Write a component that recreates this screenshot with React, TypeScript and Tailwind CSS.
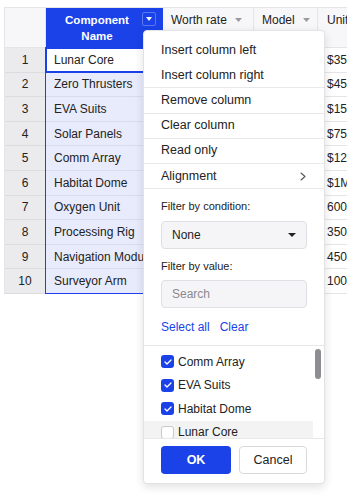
import React from "react";

const rows: [string, string, string, string][] = [
  ["Lunar Core", "High", "LC-1", "$350,000"],
  ["Zero Thrusters", "Medium", "ZT-2", "$450,000"],
  ["EVA Suits", "High", "EV-3", "$150,000"],
  ["Solar Panels", "Low", "SP-4", "$75,000"],
  ["Comm Array", "Medium", "CA-5", "$120,000"],
  ["Habitat Dome", "High", "HD-6", "$1M"],
  ["Oxygen Unit", "High", "OU-7", "600,000"],
  ["Processing Rig", "Low", "PR-8", "350,000"],
  ["Navigation Module", "Medium", "NM-9", "450,000"],
  ["Surveyor Arm", "Low", "SA-10", "100,000"],
];

const GrayArrow = () => (
  <svg width="7" height="4" viewBox="0 0 7 4" className="ml-[8px] mt-[6px] shrink-0">
    <path d="M0 0 L7 0 L3.5 4 Z" fill="#9a9a9e" />
  </svg>
);

const Check = () => (
  <span className="w-[13px] h-[13px] rounded-[3px] bg-[#1a42e8] flex items-center justify-center shrink-0">
    <svg width="8" height="6" viewBox="0 0 8 6">
      <path d="M1 3 L3 5 L7 1" stroke="white" strokeWidth="1.3" fill="none" strokeLinecap="round" strokeLinejoin="round" />
    </svg>
  </span>
);

export default function App() {
  const menuItems = [
    { label: "Insert column left", border: false },
    { label: "Insert column right", border: true },
    { label: "Remove column", border: true },
    { label: "Clear column", border: true },
    { label: "Read only", border: true },
  ];
  return (
    <div className="relative w-[347px] h-[500px] overflow-hidden bg-white text-[#222222] font-[Liberation_Sans,Arial,sans-serif]">
      <div className="pt-[7px] pl-[4px]">
        <div className="relative w-[500px] border-t border-l border-[#e5e5e8]">
          {/* header */}
          <div className="flex h-[40px]">
            <div className="w-[41px] h-full bg-[#f7f7f9] border-r border-b border-[#e5e5e8]" />
            <div className="relative w-[117px] h-full bg-[#1a42e8] border-r border-[#1a42e8] pl-2 pr-[22px] pt-[4px] text-center text-white font-bold text-[11.5px] leading-[16px]">
              Component
              <br />
              Name
              <div className="absolute right-[6px] top-[4px] w-[14px] h-[14px] rounded-[2px] border border-[#5a78f0] flex items-center justify-center">
                <svg width="6" height="4" viewBox="0 0 6 4">
                  <path d="M0 0 L6 0 L3 4 Z" fill="white" />
                </svg>
              </div>
            </div>
            <div className="w-[91px] h-full bg-[#f7f7f9] border-r border-b border-[#e5e5e8] pl-2 pt-[4px] flex items-start text-[12px] leading-[16px]">
              Worth rate
              <GrayArrow />
            </div>
            <div className="w-[64px] h-full bg-[#f7f7f9] border-r border-b border-[#e5e5e8] pl-2 pt-[4px] flex items-start text-[12px] leading-[16px]">
              Model
              <GrayArrow />
            </div>
            <div className="w-[100px] h-full bg-[#f7f7f9] border-r border-b border-[#e5e5e8] pl-[9px] pt-[4px] text-[12px] leading-[16px] whitespace-nowrap">
              Unit price
            </div>
          </div>
          {rows.map((r, i) => (
            <div key={i} className="flex h-[24.6px] text-[12px]">
              <div className="w-[41px] h-full bg-[#ebebed] border-r border-b border-[#dcdcdf] flex items-center justify-center">
                {i + 1}
              </div>
              <div
                className={
                  "w-[117px] h-full border-r border-b border-[#d9dcec] flex items-center pl-2 whitespace-nowrap overflow-hidden " +
                  (i === 0 ? "bg-white" : "bg-[#e8ebfc]")
                }
              >
                {r[0]}
              </div>
              <div className="w-[91px] h-full border-r border-b border-[#e5e5e8] flex items-center pl-2">{r[1]}</div>
              <div className="w-[64px] h-full border-r border-b border-[#e5e5e8] flex items-center pl-2">{r[2]}</div>
              <div className="w-[100px] h-full border-r border-b border-[#e5e5e8] flex items-center pl-[9px] whitespace-nowrap">
                {r[3]}
              </div>
            </div>
          ))}
          {/* selection overlays */}
          <div className="absolute left-[40px] top-[39px] w-[118px] h-[247px] border border-[#1a42e8] pointer-events-none" />
          <div className="absolute left-[40px] top-[39px] w-[118px] h-[26px] border-2 border-[#1a42e8] pointer-events-none" />
        </div>
      </div>

      {/* context menu */}
      <div className="absolute left-[143px] top-[30px] w-[182px] h-[454px] bg-white border border-[#e3e3e6] rounded-[4px] shadow-[0_3px_10px_rgba(0,0,0,0.12)] flex flex-col pt-[7px] text-[12.5px]">
        {menuItems.map((m, i) => (
          <div
            key={i}
            className={"h-[25.2px] shrink-0 flex items-center pl-[17px] " + (m.border ? "border-b border-[#e8e8eb]" : "")}
          >
            {m.label}
          </div>
        ))}
        <div className="h-[25.2px] shrink-0 flex items-center justify-between pl-[17px] pr-[18px] border-b border-[#e8e8eb]">
          <span>Alignment</span>
          <svg width="6" height="9" viewBox="0 0 6 9">
            <path d="M1 1 L5 4.5 L1 8" stroke="#555" strokeWidth="1.1" fill="none" strokeLinecap="round" strokeLinejoin="round" />
          </svg>
        </div>
        <div className="px-[17px] pt-[10px] shrink-0 flex flex-col">
          <div className="text-[11px] leading-[14px]">Filter by condition:</div>
          <div className="mt-[8px] h-[28px] rounded-[4px] bg-[#f5f5f7] border border-[#e0e0e4] flex items-center justify-between pl-[10px] pr-[10px] text-[12px]">
            <span>None</span>
            <svg width="8" height="4" viewBox="0 0 8 4">
              <path d="M0 0 L8 0 L4 4 Z" fill="#222" />
            </svg>
          </div>
          <div className="mt-[10px] text-[11px] leading-[14px]">Filter by value:</div>
          <div className="mt-[7px] h-[28px] rounded-[4px] bg-[#f5f5f7] border border-[#e0e0e4] flex items-center pl-[10px] text-[12px] text-[#8a8a8e]">
            Search
          </div>
          <div className="mt-[11px] h-[16px] flex items-center gap-[10px] text-[12px] text-[#1a42e8]">
            <span>Select all</span>
            <span>Clear</span>
          </div>
        </div>
        <div className="mt-[10px] h-[94px] shrink-0 relative border-t border-b border-[#e8e8eb] overflow-hidden pt-[4px] text-[12px]">
          {[
            ["Comm Array", true],
            ["EVA Suits", true],
            ["Habitat Dome", true],
            ["Lunar Core", false],
          ].map(([label, checked], i) => (
            <div
              key={i}
              className={"h-[23.5px] w-[169px] flex items-center gap-[4px] pl-[17px] " + (i === 3 ? "bg-[#f3f3f4]" : "")}
            >
              {checked ? (
                <Check />
              ) : (
                <span className="w-[13px] h-[13px] rounded-[3px] bg-white border border-[#c9c9cd] shrink-0" />
              )}
              <span>{label as string}</span>
            </div>
          ))}
          <div className="absolute right-[3px] top-[3px] w-[6px] h-[30px] rounded-full bg-[#8e8e92]" />
        </div>
        <div className="px-[17px] pt-[7px] flex gap-[8px] shrink-0">
          <div className="w-[70px] h-[28px] rounded-[4px] bg-[#1a42e8] text-white font-bold text-[12.5px] flex items-center justify-center">
            OK
          </div>
          <div className="flex-1 h-[28px] rounded-[4px] bg-white border border-[#d8d8dc] text-[12.5px] flex items-center justify-center">
            Cancel
          </div>
        </div>
      </div>
    </div>
  );
}
